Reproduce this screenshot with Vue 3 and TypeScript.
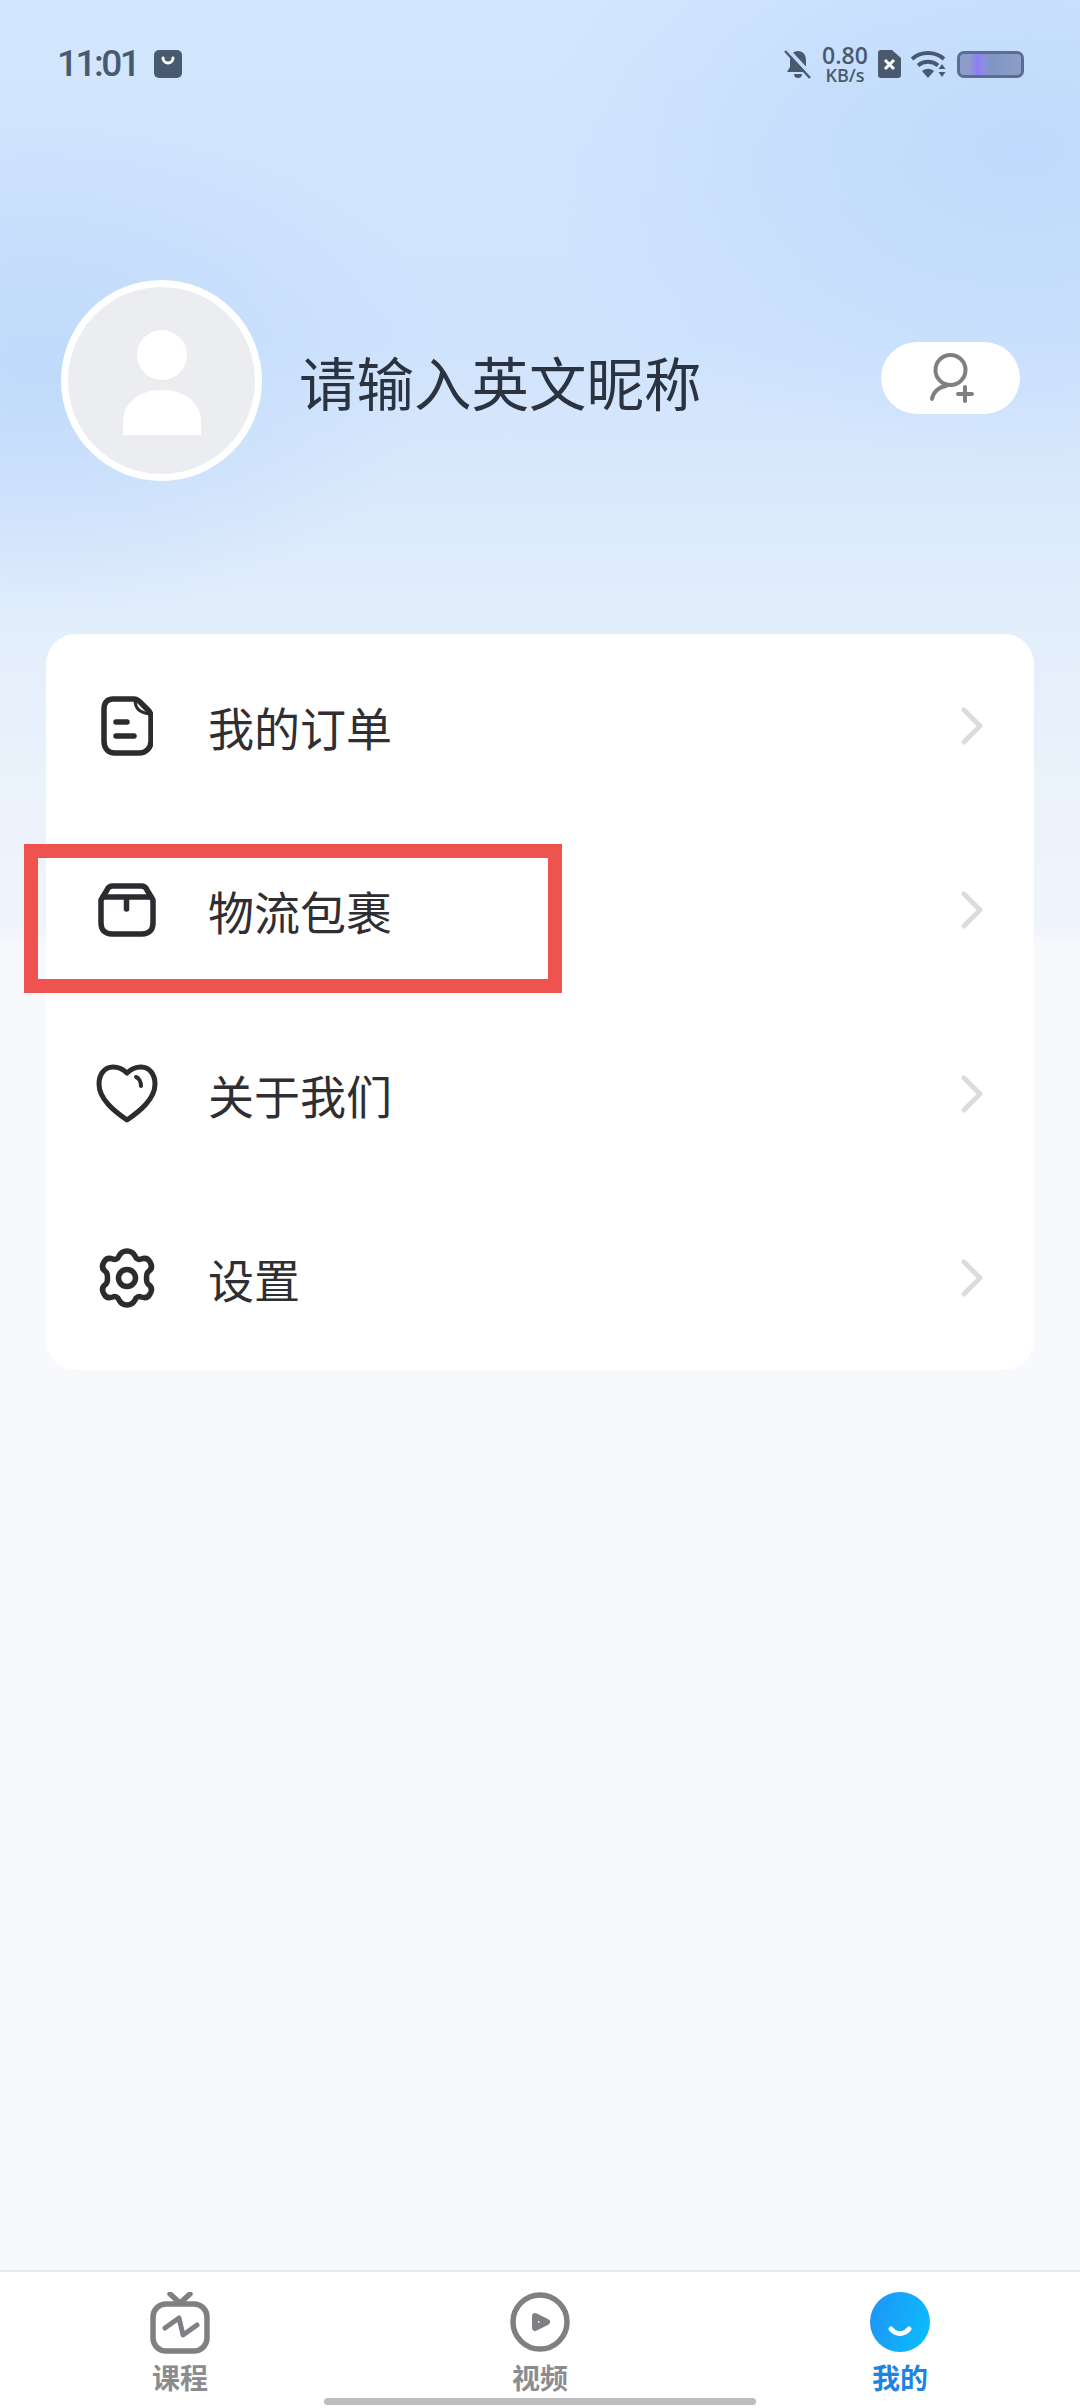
<template>
  <div class="page">
    <div class="status-bar">
      <div class="status-left">
        <span class="time">11:01</span>
        <svg class="notif" width="28" height="28" viewBox="0 0 28 28">
          <rect width="28" height="28" rx="5" fill="#4a5a6e" />
          <path d="M9 8a5 5 0 0 0 10 0" fill="none" stroke="#fff" stroke-width="3" stroke-linecap="round" />
        </svg>
      </div>
      <div class="status-right">
        <svg width="28" height="30" viewBox="0 0 28 30">
          <path d="M14 2c-5 0-8 4-8 9v7l-3 5h22l-3-5v-7c0-5-3-9-8-9zM10 25a4 4 0 0 0 8 0z" fill="#4a5a6e" />
          <path d="M3 0l25 27" stroke="#c3dcfb" stroke-width="4" />
          <path d="M1 2l25 27" stroke="#4a5a6e" stroke-width="2.4" />
        </svg>
        <div class="speed">
          <span class="speed-num">0.80</span>
          <span class="speed-unit">KB/s</span>
        </div>
        <svg width="23" height="28" viewBox="0 0 23 28">
          <path d="M3 0h11l9 8v17a3 3 0 0 1-3 3H3a3 3 0 0 1-3-3V3a3 3 0 0 1 3-3z" fill="#4a5a6e" />
          <path d="M7 10l9 9M16 10l-9 9" stroke="#fff" stroke-width="3" />
        </svg>
        <svg width="36" height="28" viewBox="0 0 36 28">
          <g fill="none" stroke="#4a5a6e" stroke-width="4">
            <path d="M1 9c9-8 23-8 32 0" />
            <path d="M7 15.500c6-5 14-5 20 0" />
          </g>
          <path d="M11 21c4-3 8-3 12 0l-6 7z" fill="#4a5a6e" />
          <path d="M31 14l3.500 5h-7zM31 27l3.500-5h-7z" fill="#4a5a6e" />
        </svg>
        <div class="battery"></div>
      </div>
    </div>

    <div class="profile">
      <div class="avatar">
        <svg width="78" height="106" viewBox="0 0 78 106">
          <circle cx="39" cy="25" r="25" fill="#fff" />
          <path d="M0 105V92C0 72 17 60 39 60s39 12 39 32v13z" fill="#fff" />
        </svg>
      </div>
      <span class="nickname">请输入英文昵称</span>
      <div class="add-btn">
        <svg width="48" height="50" viewBox="0 0 48 50" fill="none" stroke="#7d7f82" stroke-linecap="round" stroke-width="4">
          <circle cx="23.500" cy="17" r="15" />
          <path d="M5 46c1-7 7-12 14-13" />
          <path d="M31 41h14M38 34v14" />
        </svg>
      </div>
    </div>

    <div class="menu-card">
      <div v-for="item in menu" :key="item.name" class="menu-row">
        <span class="menu-icon">
          <svg v-if="item.icon === 'order'" width="52" height="60" viewBox="0 0 52 60" fill="none" stroke="#2b2c30" stroke-width="5.500" stroke-linecap="round" stroke-linejoin="round">
            <path d="M12 3h21c3 0 4 1 6 3l8 8c2 2 3 3 3 6v25c0 7-5 12-12 12H14C7 57 3 52 3 45V13C3 7 6 3 12 3z" />
            <path d="M34 3c0 9 3 13 15 15" stroke-width="3" />
            <path d="M15 26h11M15 40h18" />
          </svg>
          <svg v-else-if="item.icon === 'box'" width="58" height="54" viewBox="0 0 58 54" fill="none" stroke="#2b2c30" stroke-width="5.500" stroke-linecap="round" stroke-linejoin="round">
            <path d="M15 3h28c3 0 5 1 6 4l6 10v23c0 7-4 11-11 11H14C7 51 3 47 3 40V17L9 7c1-3 3-4 6-4z" />
            <path d="M5 14h48" />
            <path d="M28.500 15v11" />
          </svg>
          <svg v-else-if="item.icon === 'heart'" width="62" height="60" viewBox="0 0 62 60" fill="none" stroke="#2b2c30" stroke-width="5" stroke-linecap="round" stroke-linejoin="round">
            <path d="M31 9C27 5 22 3 17 3 8 3 3 11 3 20c0 15 15 27 28 36 13-9 28-21 28-36C59 11 54 3 45 3c-5 0-10 2-14 6z" />
            <path d="M40 13c3 1 5 5 5 9" stroke-width="4" />
          </svg>
          <svg v-else width="58" height="60" viewBox="0 0 58 60" fill="none" stroke="#2b2c30" stroke-width="5.500" stroke-linejoin="round">
            <path d="M29 3c5 0 7 3 8 5 1 3 4 4 6 3 3-1 7-1 9 3 3 5 1 8-2 10-2 2-2 10 0 12 3 2 5 5 2 10-2 4-6 4-9 3-2-1-5 0-6 3-1 2-3 5-8 5s-7-3-8-5c-1-3-4-4-6-3-3 1-7 1-9-3-3-5-1-8 2-10 2-2 2-10 0-12-3-2-5-5-2-10 2-4 6-4 9-3 2 1 5 0 6-3 1-2 3-5 8-5z" />
            <circle cx="29" cy="30" r="8.500" />
          </svg>
        </span>
        <span class="menu-name">{{ item.name }}</span>
        <svg class="chevron" width="22" height="38" viewBox="0 0 22 38" fill="none" stroke="#dcdcdc" stroke-width="5" stroke-linecap="round" stroke-linejoin="round">
          <path d="M3 3l16 16L3 35" />
        </svg>
      </div>
    </div>

    <!-- 红框标注 -->
    <div class="highlight"></div>

    <div class="tab-bar">
      <div v-for="tab in tabs" :key="tab.name" class="tab" :class="{ active: tab.active }">
        <svg v-if="tab.icon === 'tv'" width="60" height="62" viewBox="0 0 60 62" fill="none" stroke="#7f8083" stroke-width="5.500" stroke-linecap="round" stroke-linejoin="round">
          <rect x="3" y="12" width="54" height="47" rx="13" />
          <path d="M20 2l10 9L40 2" />
          <path d="M15 36l14-10 4 17 14-10" stroke-width="5" />
        </svg>
        <svg v-else-if="tab.icon === 'play'" width="60" height="60" viewBox="0 0 60 60" fill="none" stroke="#7f8083" stroke-width="5.500" stroke-linejoin="round">
          <circle cx="30" cy="30" r="27" />
          <path d="M25 24l12 6-12 6z" stroke-width="6" />
        </svg>
        <svg v-else width="60" height="60" viewBox="0 0 60 60">
          <defs>
            <linearGradient id="me-grad" x1="0" y1="0" x2="1" y2="0.300">
              <stop offset="0" stop-color="#1f93f5" />
              <stop offset="1" stop-color="#0db8fd" />
            </linearGradient>
          </defs>
          <circle cx="30" cy="30" r="30" fill="url(#me-grad)" />
          <path d="M21 37c5 6 13 6 18 0" fill="none" stroke="#fff" stroke-width="5" stroke-linecap="round" />
        </svg>
        <span class="tab-name">{{ tab.name }}</span>
      </div>
      <div class="home-bar"></div>
    </div>
  </div>
</template>

<script setup lang="ts">
interface MenuItem {
  name: string
  icon: string
}
interface TabItem {
  name: string
  icon: string
  active?: boolean
}

const menu: MenuItem[] = [
  { name: '我的订单', icon: 'order' },
  { name: '物流包裹', icon: 'box' },
  { name: '关于我们', icon: 'heart' },
  { name: '设置', icon: 'gear' },
]

const tabs: TabItem[] = [
  { name: '课程', icon: 'tv' },
  { name: '视频', icon: 'play' },
  { name: '我的', icon: 'me', active: true },
]
</script>

<style scoped>
.page {
  position: relative;
  display: flex;
  flex-direction: column;
  width: 1080px;
  height: 2408px;
  overflow: hidden;
  font-family: "Noto Sans CJK SC", "Noto Sans", sans-serif;
  background:
    radial-gradient(400px 260px at 40px 360px, #c0dafb 0%, rgba(192, 218, 251, 0) 100%) no-repeat,
    radial-gradient(480px 320px at 1020px 150px, #bfdafc 0%, rgba(191, 218, 252, 0) 100%) no-repeat,
    linear-gradient(180deg, #d2e6fe 0, #cfe3fd 340px, #dceafb 520px, #e6f0fb 680px, #f0f5fc 930px, #f7f9fc 945px) no-repeat,
    #f7f9fc;
}

.status-bar {
  display: flex;
  align-items: center;
  justify-content: space-between;
  height: 28px;
  padding: 50px 56px 0 57px;
  color: #4a5a6e;
}
.status-left {
  display: flex;
  align-items: center;
  gap: 16px;
}
.time {
  font-family: Roboto, sans-serif;
  font-size: 37px;
  font-weight: 500;
  letter-spacing: -2.500px;
  line-height: 28px;
}
.status-right {
  display: flex;
  align-items: center;
  gap: 10px;
}
.speed {
  display: flex;
  flex-direction: column;
  align-items: center;
  width: 46px;
  font-family: "Open Sans", sans-serif;
  font-weight: 600;
}
.speed-num {
  font-size: 23px;
  line-height: 21px;
}
.speed-unit {
  font-size: 18px;
  line-height: 18px;
}
.battery {
  box-sizing: border-box;
  width: 67px;
  height: 27px;
  border: 3px solid #5b6d90;
  border-radius: 7px;
  background: linear-gradient(90deg, #8c9ccb 0, #8c9ccb 10px, #8f7cf8 17px, #8a90d8 24px, #8095c4 32px, #8d9dc9 100%);
}

.profile {
  display: flex;
  align-items: center;
  height: 201px;
  margin-top: 202px;
  padding: 0 60px 0 61px;
}
.avatar {
  box-sizing: border-box;
  display: flex;
  align-items: center;
  justify-content: center;
  flex: none;
  width: 201px;
  height: 201px;
  border: 7px solid #fff;
  border-radius: 50%;
  background: #ecedf0;
}
.avatar svg {
  margin-top: 5px;
}
.nickname {
  flex: 1;
  margin-left: 37px;
  font-size: 57.500px;
  line-height: 70px;
  color: #2b3340;
}
.add-btn {
  display: flex;
  align-items: center;
  justify-content: center;
  width: 139px;
  height: 72px;
  margin-top: -5px;
  border-radius: 36px;
  background: #fff;
}

.menu-card {
  width: 988px;
  margin: 153px 0 0 46px;
  border-radius: 30px;
  background: #fff;
}
.menu-row {
  display: flex;
  align-items: center;
  height: 184px;
  padding: 0 51px 0 50px;
}
.menu-icon {
  display: flex;
  align-items: center;
  justify-content: center;
  flex: none;
  width: 62px;
  margin-right: 50px;
}
.menu-name {
  flex: 1;
  font-size: 46px;
  line-height: 60px;
  color: #2e2e33;
}

.highlight {
  box-sizing: border-box;
  position: absolute;
  left: 24px;
  top: 844px;
  width: 538px;
  height: 149px;
  border: 14px solid #ef5350;
}

.tab-bar {
  position: relative;
  display: grid;
  grid-template-columns: repeat(3, 1fr);
  margin-top: auto;
  height: 136px;
  border-top: 2px solid #e6e8ec;
  background: #fff;
}
.tab {
  display: flex;
  flex-direction: column;
  align-items: center;
  padding-top: 20px;
}
.tab svg {
  flex: none;
}
.tab:not(:first-child) svg {
  margin-bottom: 2px;
}
.tab-name {
  margin-top: 5px;
  font-size: 28px;
  font-weight: 700;
  line-height: 36px;
  color: #8b8c8f;
}
.tab.active .tab-name {
  color: #1d84e0;
}
.home-bar {
  position: absolute;
  left: 324px;
  bottom: 3px;
  width: 432px;
  height: 7px;
  border-radius: 4px;
  background: #bdbdc0;
}
</style>
